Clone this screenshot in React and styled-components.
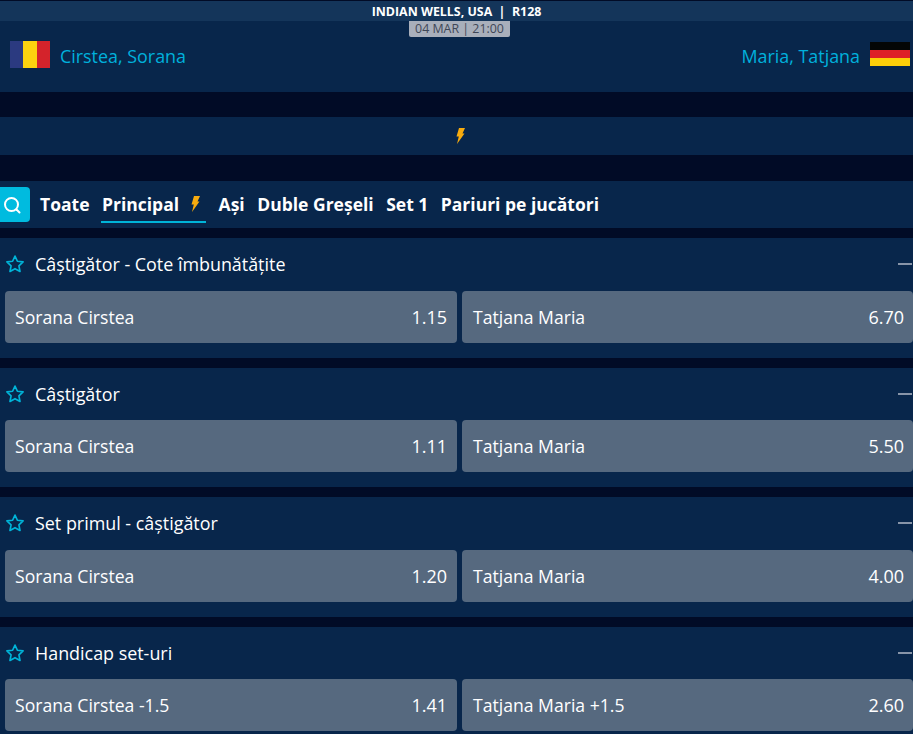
import React from "react";
import styled, { createGlobalStyle } from "styled-components";

const GlobalStyle = createGlobalStyle`
  html, body {
    margin: 0;
    padding: 0;
    height: 100%;
    overflow: hidden;
    background-color: #010b26;
    font-family: "Open Sans", "Liberation Sans", sans-serif;
  }
`;

const Page = styled.div`
  width: 913px;
  height: 734px;
  overflow: hidden;
  padding-top: 1px;
  box-sizing: border-box;
  background-color: #010b26;
`;

const TourneyBar = styled.div`
  height: 20px;
  background-color: #14355a;
  color: #fff;
  font-size: 12.4px;
  font-weight: 700;
  line-height: 21px;
  text-align: center;
  white-space: pre;
`;

const MatchHeader = styled.div`
  position: relative;
  height: 71px;
  background-color: #08264b;
  display: flex;
  justify-content: space-between;
  padding: 19px 3px 0 10px;
  box-sizing: border-box;
`;

const DateBadge = styled.div`
  position: absolute;
  top: 0;
  left: 409px;
  width: 101px;
  height: 16px;
  background-color: #a9afbb;
  border-radius: 0 0 2px 2px;
  color: #3f4757;
  font-size: 12.4px;
  line-height: 16px;
  text-align: center;
  white-space: pre;
`;

const Player = styled.div`
  display: flex;
  align-items: center;
  gap: 10px;
  height: 28px;
  color: #00b0dc;
  font-size: 17.9px;
`;

const PlayerName = styled.span`
  padding-top: 3px;
`;

const Flag = styled.div`
  width: 40px;
  height: ${(p) => p.$height}px;
  display: flex;
  flex-direction: ${(p) => (p.$row ? "row" : "column")};
`;

const Stripe = styled.div`
  flex: 1;
  background-color: ${(p) => p.$color};
`;

const BoostBand = styled.div`
  height: 38px;
  margin-top: 25px;
  padding-left: 6px;
  background-color: #08264b;
  display: flex;
  align-items: center;
  justify-content: center;
`;

const Tabs = styled.div`
  height: 47px;
  margin-top: 26px;
  background-color: #08264b;
  display: flex;
  align-items: flex-start;
  padding-top: 6px;
  box-sizing: border-box;
`;

const SearchButton = styled.div`
  width: 30px;
  height: 35px;
  padding-right: 6px;
  box-sizing: border-box;
  background-color: #00bbdf;
  border-radius: 0 4px 4px 0;
  display: flex;
  align-items: center;
  justify-content: center;
  margin-right: 10px;
`;

const Tab = styled.div`
  display: flex;
  align-items: center;
  gap: 11px;
  height: 36px;
  box-sizing: border-box;
  color: #fff;
  font-size: 17.5px;
  font-weight: 700;
  margin-right: 12.5px;
  white-space: nowrap;
  border-bottom: 2px solid ${(p) => (p.$active ? "#00b4d8" : "transparent")};
  ${(p) => p.$active && "margin-left: -1px; padding-left: 1px; padding-right: 6px;"}
`;

const Market = styled.section`
  height: ${(p) => p.$height}px;
  margin-top: 10px;
  background-color: #08264b;
`;

const MarketHead = styled.div`
  height: ${(p) => p.$height}px;
  display: flex;
  align-items: flex-start;
  padding: 14px 0 0 5px;
  box-sizing: border-box;
  position: relative;
`;

const MarketTitle = styled.h3`
  margin: 0 0 0 10px;
  color: #fff;
  font-size: 17.9px;
  font-weight: 500;
  line-height: 24px;
`;

const Collapse = styled.span`
  position: absolute;
  right: 1px;
  top: 25px;
  width: 14px;
  height: 2px;
  background-color: #8794a8;
`;

const Odds = styled.div`
  display: grid;
  grid-template-columns: 452px 451px;
  gap: 5px;
  padding-left: 5px;
`;

const OddButton = styled.div`
  height: 52px;
  background-color: #56697f;
  border-radius: 4px;
  display: flex;
  align-items: center;
  justify-content: space-between;
  padding: ${(p) => (p.$away ? "0 9px 0 11px" : "0 10px")};
  box-sizing: border-box;
  color: #fff;
  font-size: 17.6px;
`;

const OddValue = styled.span`
  font-size: 18px;
`;

const StarIcon = styled.svg`
  margin-top: 2px;
`;

const Star = () => (
  <StarIcon width="20" height="20" viewBox="0 0 24 24" fill="none" stroke="#00b4d8" strokeWidth="2" strokeLinejoin="round">
    <path d="M12 2.5l2.9 6.2 6.8.8-5 4.7 1.3 6.8-6-3.4-6 3.4 1.3-6.8-5-4.7 6.8-.8z" />
  </StarIcon>
);

const Bolt = () => (
  <svg width="10" height="16" viewBox="0 0 10 16">
    <path d="M4 0L10 0L7.5 5.5L9.5 5.5L2 16L3.8 8.5L1.5 8.5Z" fill="#f7ab0e" />
  </svg>
);

const Search = () => (
  <svg width="18" height="18" viewBox="0 0 18 18" fill="none" stroke="#fff" strokeWidth="2" strokeLinecap="round">
    <circle cx="8.5" cy="8.5" r="6.5" />
    <path d="M13.5 13.5L16.5 16.5" />
  </svg>
);

const markets = [
  { title: "Câștigător - Cote îmbunătățite", height: 120, head: 53, home: "Sorana Cirstea", homeOdd: "1.15", away: "Tatjana Maria", awayOdd: "6.70" },
  { title: "Câștigător", height: 119, head: 52, home: "Sorana Cirstea", homeOdd: "1.11", away: "Tatjana Maria", awayOdd: "5.50" },
  { title: "Set primul - câștigător", height: 120, head: 53, home: "Sorana Cirstea", homeOdd: "1.20", away: "Tatjana Maria", awayOdd: "4.00" },
  { title: "Handicap set-uri", height: 120, head: 52, home: "Sorana Cirstea -1.5", homeOdd: "1.41", away: "Tatjana Maria +1.5", awayOdd: "2.60" },
];

const App = () => {
  return (
    <Page>
      <GlobalStyle />
      <TourneyBar>{"INDIAN WELLS, USA  |  R128"}</TourneyBar>
      <MatchHeader>
        <DateBadge>{"04 MAR | 21:00"}</DateBadge>
        <Player>
          <Flag $row $height={27}>
            <Stripe $color="#2b3a80" />
            <Stripe $color="#fdd20f" />
            <Stripe $color="#d4232b" />
          </Flag>
          <PlayerName>Cirstea, Sorana</PlayerName>
        </Player>
        <Player>
          <PlayerName>Maria, Tatjana</PlayerName>
          <Flag $height={24}>
            <Stripe $color="#040606" />
            <Stripe $color="#de2027" />
            <Stripe $color="#fdce08" />
          </Flag>
        </Player>
      </MatchHeader>
      <BoostBand>
        <Bolt />
      </BoostBand>
      <Tabs>
        <SearchButton>
          <Search />
        </SearchButton>
        <Tab>Toate</Tab>
        <Tab $active>
          Principal
          <Bolt />
        </Tab>
        <Tab>Ași</Tab>
        <Tab>Duble Greșeli</Tab>
        <Tab>Set 1</Tab>
        <Tab>Pariuri pe jucători</Tab>
      </Tabs>
      {markets.map((m) => (
        <Market key={m.title} $height={m.height}>
          <MarketHead $height={m.head}>
            <Star />
            <MarketTitle>{m.title}</MarketTitle>
            <Collapse />
          </MarketHead>
          <Odds>
            <OddButton>
              <span>{m.home}</span>
              <OddValue>{m.homeOdd}</OddValue>
            </OddButton>
            <OddButton $away>
              <span>{m.away}</span>
              <OddValue>{m.awayOdd}</OddValue>
            </OddButton>
          </Odds>
        </Market>
      ))}
    </Page>
  );
};

export default App;
